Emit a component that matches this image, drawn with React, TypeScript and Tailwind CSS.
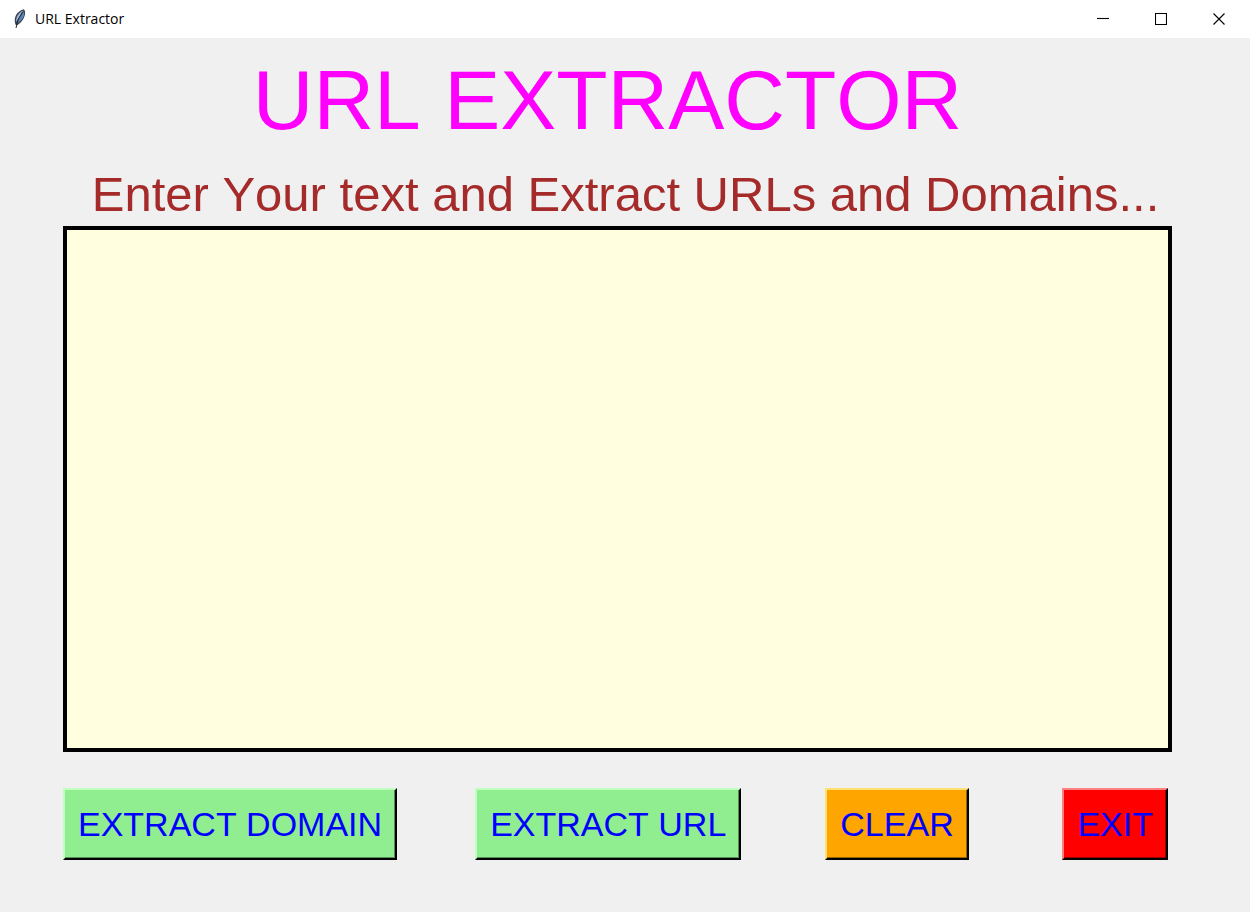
import { useState } from "react";
import type { ButtonHTMLAttributes } from "react";

const domainPattern = /https?:\/\/([^\s/]+)/g;
const urlPattern = /https?:\/\/\S+/g;

function FeatherIcon() {
  return (
    <svg className="h-5 w-4 shrink-0" viewBox="0 0 16 20" aria-hidden="true">
      <path d="M11.800.3C8 1 4.200 4.600 3.100 8.500c-.7 2.600-.4 5 .6 7.500l1.600.2c3.500-2 6.700-6 7.700-10.700.4-2 .1-4.200-1.200-5.200Z" fill="#3a4656" />
      <path d="M11.200 1.500C8 3 5 6.500 4.200 10.500l.2 2.500L8 7.500Z" fill="#a9c0dc" />
      <path d="M12 2.500 8 8.500l-2.700 6C8.500 12.500 11.500 9 12.200 5.500Z" fill="#5b86bd" />
      <path d="M10.500 3 6 10.500l-2 8.500" fill="none" stroke="#20252d" strokeWidth="1" />
    </svg>
  );
}

function CaptionButton({ label, path }: { label: string; path: string }) {
  return (
    <button type="button" aria-label={label} className="flex h-full w-[58px] items-center justify-center hover:bg-gray-200">
      <svg className="size-3" viewBox="0 0 12 12" fill="none" stroke="#000" strokeWidth="1.1" aria-hidden="true">
        <path d={path} />
      </svg>
    </button>
  );
}

function RaisedButton({ className, ...props }: ButtonHTMLAttributes<HTMLButtonElement>) {
  return (
    <button
      type="button"
      className={`h-[72px] justify-self-start border-2 border-r-black border-b-black px-[13px] text-[34px] leading-10 whitespace-nowrap text-[#0000ff] ${className}`}
      {...props}
    />
  );
}

export default function App() {
  const [text, setText] = useState("");

  return (
    <div className="flex min-h-screen flex-col bg-[#f0f0f0] font-['Liberation_Sans',Arial,sans-serif] [font-kerning:none]">
      <header className="flex h-[38px] items-center bg-white pl-3">
        <FeatherIcon />
        <span className="ml-[7px] flex-1 font-['Open_Sans',sans-serif] text-sm text-black">URL Extractor</span>
        <div className="flex h-full pr-[2px]">
          <CaptionButton label="Minimize" path="M0 5.500h12" />
          <CaptionButton label="Maximize" path="M.5.500h11v11H.5Z" />
          <CaptionButton label="Close" path="m.5.500 11 11m0-11-11 11" />
        </div>
      </header>

      <main className="flex flex-1 flex-col pr-[78px] pb-[52px] pl-[63px]">
        <h1 className="mt-3.5 pr-5 text-center text-[84px] leading-[96px] text-[#ff00ff]">URL EXTRACTOR</h1>
        <label htmlFor="source" className="mt-4 mb-0.5 pl-4 text-center text-[49px] leading-[60px] text-[#a52a2a]">
          Enter Your text and Extract URLs and Domains...
        </label>
        <textarea
          id="source"
          value={text}
          onChange={(event) => setText(event.target.value)}
          className="min-h-60 flex-1 resize-none border-4 border-black bg-[#ffffe0] p-2 text-2xl text-black outline-none"
        />
        <div className="mt-9 grid grid-cols-[412fr_350fr_237fr_auto] pr-1">
          <RaisedButton
            className="border-t-[#c0ffc0] border-l-[#c0ffc0] bg-[#90ee90] shadow-[inset_-1px_-1px_0_#568f56]"
            onClick={() => setText(Array.from(text.matchAll(domainPattern), (match) => match[1]).join("\n"))}
          >
            EXTRACT DOMAIN
          </RaisedButton>
          <RaisedButton
            className="border-t-[#c0ffc0] border-l-[#c0ffc0] bg-[#90ee90] shadow-[inset_-1px_-1px_0_#568f56]"
            onClick={() => setText((text.match(urlPattern) ?? []).join("\n"))}
          >
            EXTRACT URL
          </RaisedButton>
          <RaisedButton
            className="border-t-[#ffe070] border-l-[#ffe070] bg-[#ffa500] shadow-[inset_-1px_-1px_0_#996300]"
            onClick={() => setText("")}
          >
            CLEAR
          </RaisedButton>
          <RaisedButton
            className="border-t-[#ff8080] border-l-[#ff8080] bg-[#ff0000] shadow-[inset_-1px_-1px_0_#990000]"
            onClick={() => window.close()}
          >
            EXIT
          </RaisedButton>
        </div>
      </main>
    </div>
  );
}
